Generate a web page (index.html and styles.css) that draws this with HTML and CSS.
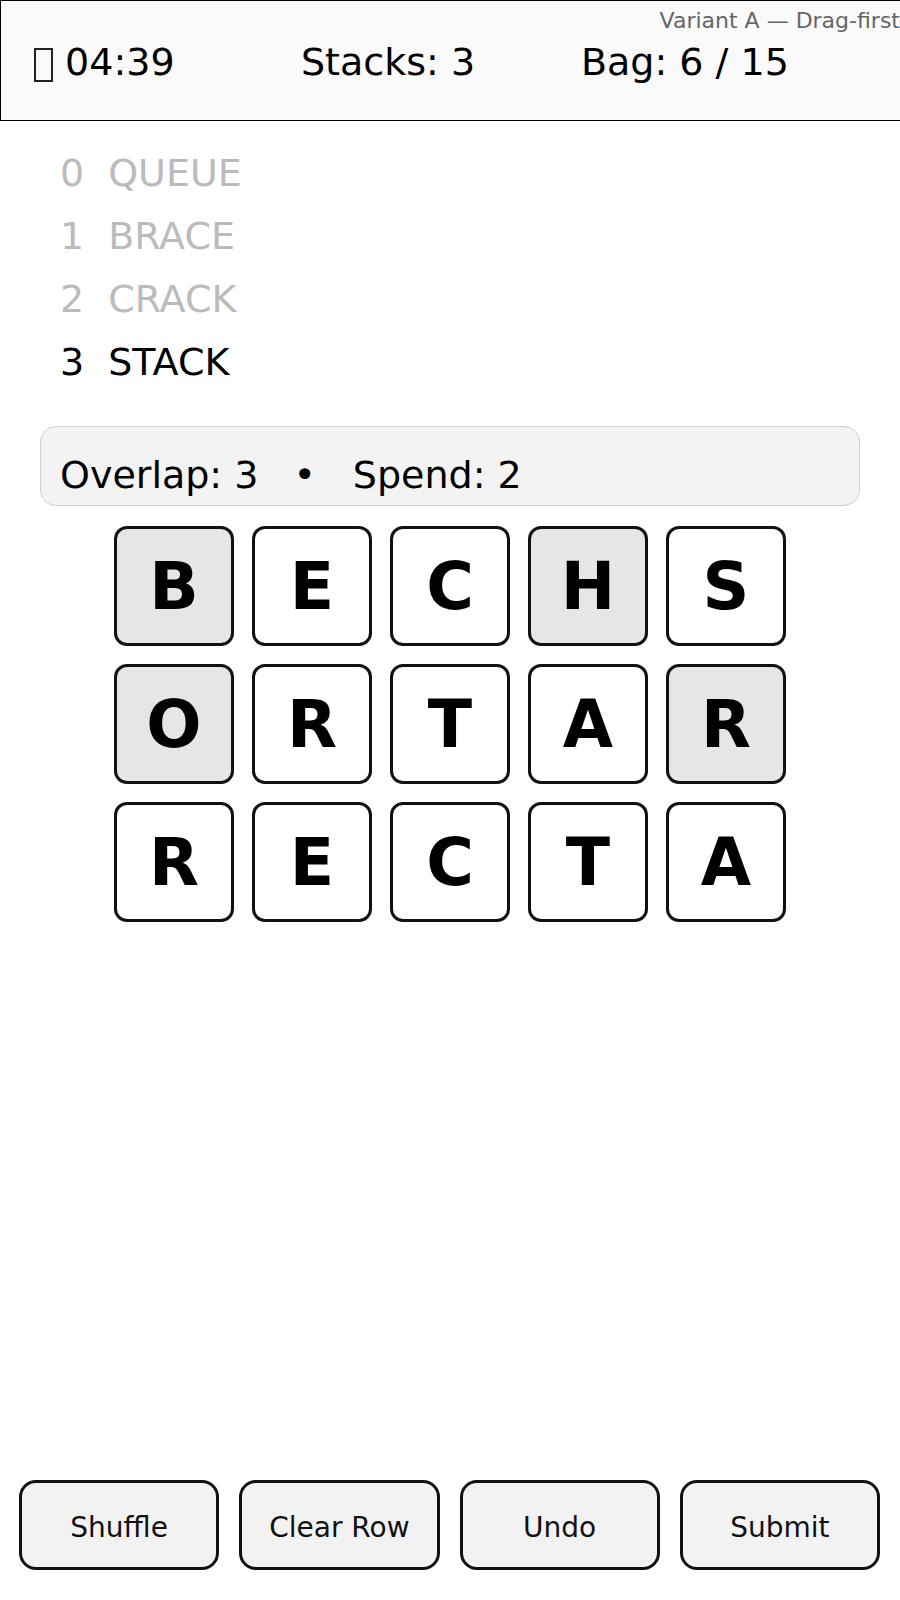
FILE: index.html
```html
<!DOCTYPE html>
<html lang="en">
<head>
<meta charset="utf-8">
<title>Stacks — Variant A</title>
<link rel="stylesheet" href="styles.css">
</head>
<body>
<div class="page">
  <header class="hud">
    <div class="hud-item timer"><span class="icon"></span> 04:39</div>
    <div class="hud-item">Stacks: 3</div>
    <div class="hud-item">Bag: 6 / 15</div>
    <div class="variant">Variant A — Drag-first</div>
  </header>

  <ol class="words">
    <li class="word done"><span class="num">0</span><span class="txt">QUEUE</span></li>
    <li class="word done"><span class="num">1</span><span class="txt">BRACE</span></li>
    <li class="word done"><span class="num">2</span><span class="txt">CRACK</span></li>
    <li class="word current"><span class="num">3</span><span class="txt">STACK</span></li>
  </ol>

  <div class="info">
    <span>Overlap: 3</span><span class="dot">•</span><span>Spend: 2</span>
  </div>

  <div class="grid">
    <div class="tile sel">B</div>
    <div class="tile">E</div>
    <div class="tile">C</div>
    <div class="tile sel">H</div>
    <div class="tile">S</div>
    <div class="tile sel">O</div>
    <div class="tile">R</div>
    <div class="tile">T</div>
    <div class="tile">A</div>
    <div class="tile sel">R</div>
    <div class="tile">R</div>
    <div class="tile">E</div>
    <div class="tile">C</div>
    <div class="tile">T</div>
    <div class="tile">A</div>
  </div>

  <div class="actions">
    <button class="btn">Shuffle</button>
    <button class="btn">Clear Row</button>
    <button class="btn">Undo</button>
    <button class="btn">Submit</button>
  </div>
</div>
</body>
</html>
```

FILE: styles.css
```css
html, body {
  margin: 0;
  padding: 0;
  background: #ffffff;
  overflow: hidden;
}

body {
  font-family: "DejaVu Sans", "Noto Sans", sans-serif;
  color: #000;
}

.page {
  display: flex;
  flex-direction: column;
  min-height: 1600px;
  box-sizing: border-box;
  padding-bottom: 30px;
}

.hud {
  position: relative;
  display: grid;
  grid-template-columns: 270px 280px auto;
  width: 901px;
  box-sizing: border-box;
  padding: 40px 0 36px 30px;
  border: 1px solid #000;
  background: #fafafa;
  font-size: 38px;
  line-height: 43px;
}

.hud-item {
  white-space: nowrap;
}

.timer {
  padding-left: 1px;
}

.icon {
  display: inline-block;
  width: 19px;
  height: 34px;
  box-sizing: border-box;
  margin-left: 2px;
  border: 2px solid #222;
  vertical-align: -7px;
}

.variant {
  position: absolute;
  top: 7px;
  right: 0;
  font-size: 22px;
  line-height: 26px;
  color: #666;
  white-space: nowrap;
}

.words {
  list-style: none;
  margin: 21px 0 0 0;
  padding: 0 0 0 60px;
  font-size: 38px;
  line-height: 63px;
}

.word {
  display: flex;
  gap: 24px;
}

.word.done {
  color: #bbbbbb;
}

.word.current {
  color: #000;
}

.info {
  margin: 32px 40px 0 40px;
  height: 80px;
  box-sizing: border-box;
  padding: 26px 20px 0 19px;
  border: 1px solid #cfcfcf;
  border-radius: 16px;
  background: #f3f3f3;
  font-size: 38px;
  line-height: 44px;
  white-space: nowrap;
}

.info .dot {
  margin: 0 37px 0 35px;
}

.grid {
  display: grid;
  grid-template-columns: repeat(5, 120px);
  gap: 18px;
  justify-content: center;
  margin-top: 20px;
}

.tile {
  height: 120px;
  box-sizing: border-box;
  border: 3px solid #111;
  border-radius: 13px;
  background: #fff;
  display: flex;
  align-items: center;
  justify-content: center;
  font-size: 65px;
  font-weight: bold;
}

.tile.sel {
  background: #e6e6e6;
}

.actions {
  margin-top: auto;
  display: grid;
  grid-template-columns: repeat(4, 1fr);
  gap: 20px;
  padding: 0 20px 0 19px;
}

.btn {
  height: 90px;
  border: 3px solid #111;
  border-radius: 17px;
  background: #f2f2f2;
  font-family: "DejaVu Sans", sans-serif;
  font-size: 28px;
  color: #111;
  padding: 5px 0 0 0;
}
```
